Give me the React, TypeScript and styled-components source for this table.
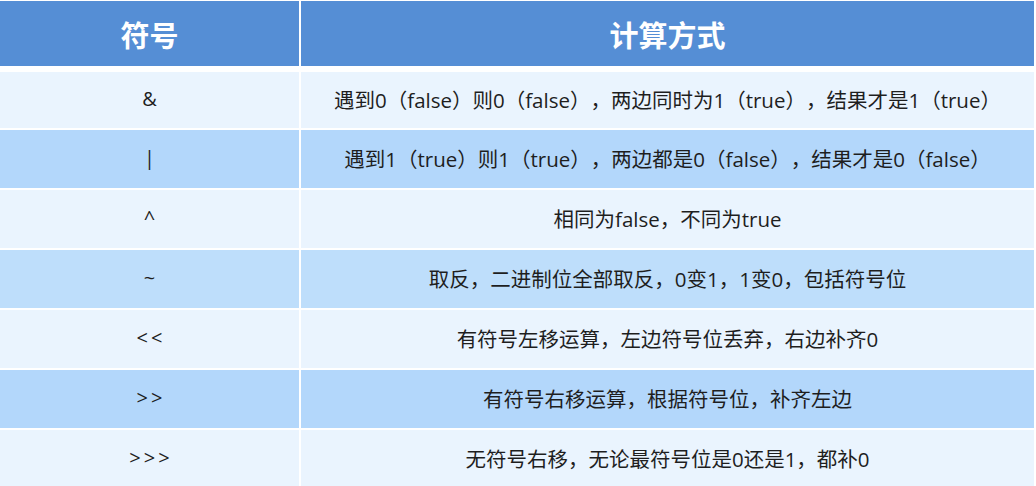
import styled, { createGlobalStyle } from "styled-components";

const GlobalStyle = createGlobalStyle`
  html, body {
    margin: 0;
    padding: 0;
    background: #ffffff;
  }
  body {
    font-family: "Open Sans", "Noto Sans CJK SC", sans-serif;
  }
`;

const ROWS = [
  { symbol: "&", rule: "遇到0（false）则0（false），两边同时为1（true），结果才是1（true）" },
  { symbol: "|", rule: "遇到1（true）则1（true），两边都是0（false），结果才是0（false）" },
  { symbol: "^", rule: "相同为false，不同为true" },
  { symbol: "~", rule: "取反，二进制位全部取反，0变1，1变0，包括符号位" },
  { symbol: "<<", rule: "有符号左移运算，左边符号位丢弃，右边补齐0" },
  { symbol: ">>", rule: "有符号右移运算，根据符号位，补齐左边" },
  { symbol: ">>>", rule: "无符号右移，无论最符号位是0还是1，都补0" },
];

const TONES: Record<string, string> = {
  light: "#eaf4fe",
  blue: "#b3d7fb",
  soft: "#bedefb",
};

const Page = styled.div`
  padding-top: 1px;
  width: 1034px;
`;

const Table = styled.div`
  display: grid;
  grid-template-columns: 299px 733px;
  column-gap: 2px;
  row-gap: 2px;
`;

const HeadCell = styled.div`
  height: 65px;
  margin-bottom: 4px;
  background: #558ed5;
  color: #ffffff;
  display: flex;
  align-items: center;
  justify-content: center;
  font-family: "Noto Sans CJK SC", sans-serif;
  font-size: 29px;
  font-weight: 700;
`;

const Cell = styled.div<{ $tone: string; $first: boolean }>`
  height: ${(p) => (p.$first ? 56 : 58)}px;
  padding-bottom: 3px;
  box-sizing: border-box;
  background: ${(p) => TONES[p.$tone]};
  color: #1e1e1e;
  display: flex;
  align-items: center;
  justify-content: center;
  font-size: 20.5px;
`;

const Symbol = styled.span`
  font-family: "Open Sans", sans-serif;
  font-size: 20px;
  letter-spacing: 3px;
  margin-right: -3px;
`;

const Rule = styled.span`
  white-space: nowrap;
  text-spacing-trim: space-all;
`;

export default function App() {
  return (
    <Page>
      <GlobalStyle />
      <Table>
        <HeadCell>符号</HeadCell>
        <HeadCell>计算方式</HeadCell>
        {ROWS.map((row, i) => {
          const tone = i % 2 === 0 ? "light" : i === 3 ? "soft" : "blue";
          return [
            <Cell key={`s${i}`} $tone={tone} $first={i === 0}>
              <Symbol>{row.symbol}</Symbol>
            </Cell>,
            <Cell key={`r${i}`} $tone={tone} $first={i === 0}>
              <Rule>{row.rule}</Rule>
            </Cell>,
          ];
        })}
      </Table>
    </Page>
  );
}
